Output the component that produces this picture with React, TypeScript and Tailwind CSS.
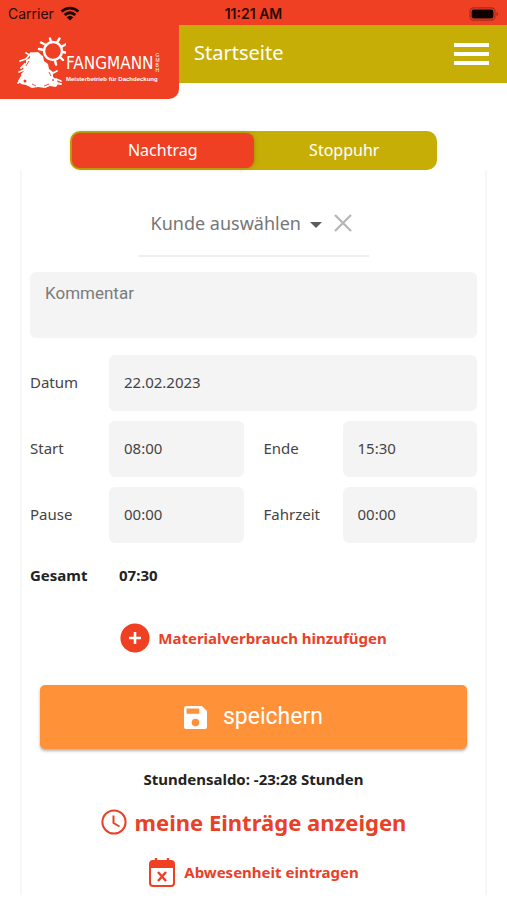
import { useState } from "react";

const body = "font-['Noto_Sans','Open_Sans',sans-serif]";

function StatusBar() {
  return (
    <div className="grid h-[25px] grid-cols-3 items-center bg-[#f04023] px-2 pt-0.5 font-['Inter',sans-serif] text-sm text-[#2a0a05]">
      <div className="flex items-center gap-1.5">
        <span>Carrier</span>
        <svg viewBox="0 0 20 15" className="h-[15px] w-5" aria-label="WLAN">
          <g fill="none" stroke="#1c0603" strokeWidth="2.8">
            <path d="M1.6 5.6a12 12 0 0 1 16.8 0" />
            <path d="M4.7 8.9a7.6 7.6 0 0 1 10.6 0" />
          </g>
          <path d="M10 14.6l-3.3-3.4a4.8 4.8 0 0 1 6.6 0z" fill="#1c0603" />
        </svg>
      </div>
      <span className="text-center font-semibold">11:21 AM</span>
      <svg viewBox="0 0 30 14" className="h-3.5 w-[30px] justify-self-end" aria-label="Akku">
        <rect x="1" y="0.8" width="25" height="12.4" rx="3.6" fill="none" stroke="#a32b18" strokeWidth="1.2" />
        <rect x="2.6" y="2.4" width="21.8" height="9.2" rx="2" fill="#100" />
        <path d="M27.5 4.8c2 .6 2 3.8 0 4.4z" fill="#a32b18" />
      </svg>
    </div>
  );
}

function Logo() {
  return (
    <a
      href="#start"
      aria-label="Fangmann"
      className="flex h-[74px] w-[179px] shrink-0 items-start rounded-br-[10px] bg-[#f04023] pt-3 pl-4 text-white"
    >
      <svg viewBox="0 0 50 52" className="h-[52px] w-[50px] shrink-0" fill="#fff">
        <circle cx="37" cy="14" r="9" fill="none" stroke="#fff" strokeWidth="2.4" />
        <path
          d="M35 5l-1-3.500M41 5.500l2.500-4M45 10l4.500-2.500M46 15l3.500.5M44 20l3 3M39 23.500l1 4M30 8l-5-2.500M28 13l-5-1"
          stroke="#fff"
          strokeWidth="2.4"
          strokeLinecap="round"
        />
        <path d="M14 17c2-3 5-1 7-2 3 0 3 3 6 4l1 5 4 3 1 5 4 3 0 5 4 3 1 4-2 3-6-1-5 2-7-1-6 1-6-3-5-1-2-3 3-4-1-3 3-3-1-4 3-3 0-4 4-2z" />
        <path
          d="M15 16l-5 6M10 22l-6 2M9 27l-4 4M8 33l-5 2M6 39l-3 5M5 44l-3 2M37 36l4-2M40 42l5 2M40 46l5 1M12 17l-2-1"
          stroke="#fff"
          strokeWidth="1.8"
          strokeLinecap="round"
        />
        <path d="M10 29l3-5M33 35l2 4M16 47l4 2M28 49l5-2" stroke="#f04023" strokeWidth="0.9" />
        <circle cx="9" cy="44" r="1.500" fill="#f04023" />
        <circle cx="37" cy="43" r="0.9" fill="#f04023" />
      </svg>
      <span className="flex flex-col pt-3.5 whitespace-nowrap">
        <span className="flex items-center gap-0.5">
          <span className="font-['DejaVu_Sans_Condensed','DejaVu_Sans',sans-serif] text-[17px] leading-6">FANGMANN</span>
          <span className="flex flex-col font-['Liberation_Sans',sans-serif] text-[5px] leading-[5px]">
            <span>G</span>
            <span>M</span>
            <span>B</span>
            <span>H</span>
          </span>
        </span>
        <span className="font-['Liberation_Sans',sans-serif] text-[6px] leading-[8px] font-bold">Meisterbetrieb für Dachdeckung</span>
      </span>
    </a>
  );
}

function Field({ id, label, value, wide, second }: { id: string; label: string; value: string; wide?: boolean; second?: boolean }) {
  return (
    <>
      <label htmlFor={id} className={`pb-0.5 ${second ? "pl-5" : ""}`}>
        {label}
      </label>
      <input
        id={id}
        type="text"
        defaultValue={value}
        className={`h-14 w-full min-w-0 rounded-md bg-[#f4f4f4] px-[15px] pb-0.5 outline-none ${wide ? "col-span-3" : ""}`}
      />
    </>
  );
}

export default function App() {
  const [tab, setTab] = useState("Nachtrag");
  return (
    <div className={`min-h-screen bg-white text-[15px] leading-6 text-[#444] ${body}`}>
      <StatusBar />
      <header className="flex h-[58px] items-start bg-[#c6ae06]">
        <Logo />
        <h1 className="flex-1 pt-3 pl-[15px] text-xl leading-8 text-white">Startseite</h1>
        <button type="button" aria-label="Menü" className="mt-[18px] mr-[18px] flex flex-col gap-[5px]">
          <span className="h-1 w-[35px] bg-white" />
          <span className="h-1 w-[35px] bg-white" />
          <span className="h-1 w-[35px] bg-white" />
        </button>
      </header>

      <main className="px-5 pt-12 pb-[7px]">
        <div className="mx-[50px] flex h-[39px] rounded-[10px] bg-[#c6ae06] p-0.5">
          {["Nachtrag", "Stoppuhr"].map((name) => (
            <button
              key={name}
              type="button"
              aria-pressed={tab === name}
              onClick={() => setTab(name)}
              className={`flex-1 rounded-lg pb-0.5 text-base text-white ${tab === name ? "bg-[#f04023] shadow-[0_0_4px_#7a5a0080]" : ""}`}
            >
              {name}
            </button>
          ))}
        </div>

        <section className="flex flex-col border-x-2 border-[#f7f7f7] px-2 pb-2">
          <div className="mx-auto mt-5 flex h-[67px] w-[230px] items-center gap-3 border-b-2 border-[#eee] pl-3">
            <div className="relative">
              <select
                aria-label="Kunde auswählen"
                className="w-[171px] appearance-none bg-transparent text-lg leading-8 text-[#767676] outline-none"
              >
                <option>Kunde auswählen</option>
              </select>
              <svg viewBox="0 0 12 6" className="pointer-events-none absolute top-[15px] right-0 h-1.5 w-3" fill="#5c5c5c">
                <path d="M0 0h12L6 6z" />
              </svg>
            </div>
            <button type="button" aria-label="Auswahl löschen">
              <svg viewBox="0 0 18 18" className="size-[18px]" stroke="#b5b5b5" strokeWidth="2.2">
                <path d="M1 1l16 16M17 1L1 17" />
              </svg>
            </button>
          </div>

          <textarea
            aria-label="Kommentar"
            placeholder="Kommentar"
            className="mt-[15px] h-[66px] resize-none rounded-md bg-[#f4f4f4] px-[15px] py-[9px] font-['Roboto',sans-serif] text-[17px] leading-6 outline-none placeholder:text-[#7b7b7b]"
          />

          <div className="mt-[17px] grid grid-cols-[79px_1fr_99px_1fr] items-center gap-y-2.5">
            <Field id="datum" label="Datum" value="22.02.2023" wide />
            <Field id="start" label="Start" value="08:00" />
            <Field id="ende" label="Ende" value="15:30" second />
            <Field id="pause" label="Pause" value="00:00" />
            <Field id="fahrzeit" label="Fahrzeit" value="00:00" second />
          </div>

          <div className="mt-5 flex font-bold text-[#222]">
            <span className="w-[89px]">Gesamt</span>
            <output>07:30</output>
          </div>

          <button type="button" className="mt-9 flex h-[30px] items-center justify-center gap-2 font-bold text-[#e84127]">
            <svg viewBox="0 0 30 30" className="size-[30px]">
              <circle cx="15" cy="15" r="14.6" fill="#f04023" />
              <path d="M15 9v12M9 15h12" stroke="#fff" strokeWidth="2.6" />
            </svg>
            Materialverbrauch hinzufügen
          </button>

          <button
            type="button"
            className="mx-2.5 mt-8 flex h-16 items-center justify-center gap-4 rounded-[5px] bg-[#ff9138] font-['Roboto',sans-serif] text-[23px] leading-8 text-white shadow-[0_2px_3px_#0000004d]"
          >
            <svg viewBox="3 3 18 18" className="size-[23px]" fill="#fff">
              <path
                fillRule="evenodd"
                d="M17 3H5a2 2 0 0 0-2 2v14a2 2 0 0 0 2 2h14a2 2 0 0 0 2-2V7zM12 19a3 3 0 1 1 0-6 3 3 0 0 1 0 6zM15 9H5V5h10z"
              />
            </svg>
            speichern
          </button>

          <p className="mt-[18px] text-center font-bold text-[#222]">Stundensaldo: -23:28 Stunden</p>

          <a href="#eintraege" className="mt-[15px] flex items-center justify-center gap-2 text-[22px] leading-8 font-bold text-[#e84127]">
            <svg viewBox="0 0 26 26" className="size-[26px]" fill="none" stroke="#e84127" strokeWidth="2">
              <circle cx="13" cy="13" r="11.6" />
              <path d="M12.5 6.5V14l6 3.5" />
            </svg>
            meine Einträge anzeigen
          </a>

          <a href="#abwesenheit" className="mt-[19px] flex h-[30px] items-center justify-center gap-2 font-bold text-[#e84127]">
            <svg viewBox="0 0 28 30" className="h-[30px] w-7" fill="none" stroke="#f04023" strokeWidth="2">
              <rect x="2" y="4" width="24" height="25" rx="3" />
              <path d="M2 4h24v7H2z" fill="#f04023" stroke="none" />
              <path d="M8 1v4M20 1v4" strokeWidth="2.4" />
              <path d="M10 15l8 9M18 15l-8 9" strokeWidth="2.4" />
            </svg>
            Abwesenheit eintragen
          </a>
        </section>
      </main>
    </div>
  );
}
